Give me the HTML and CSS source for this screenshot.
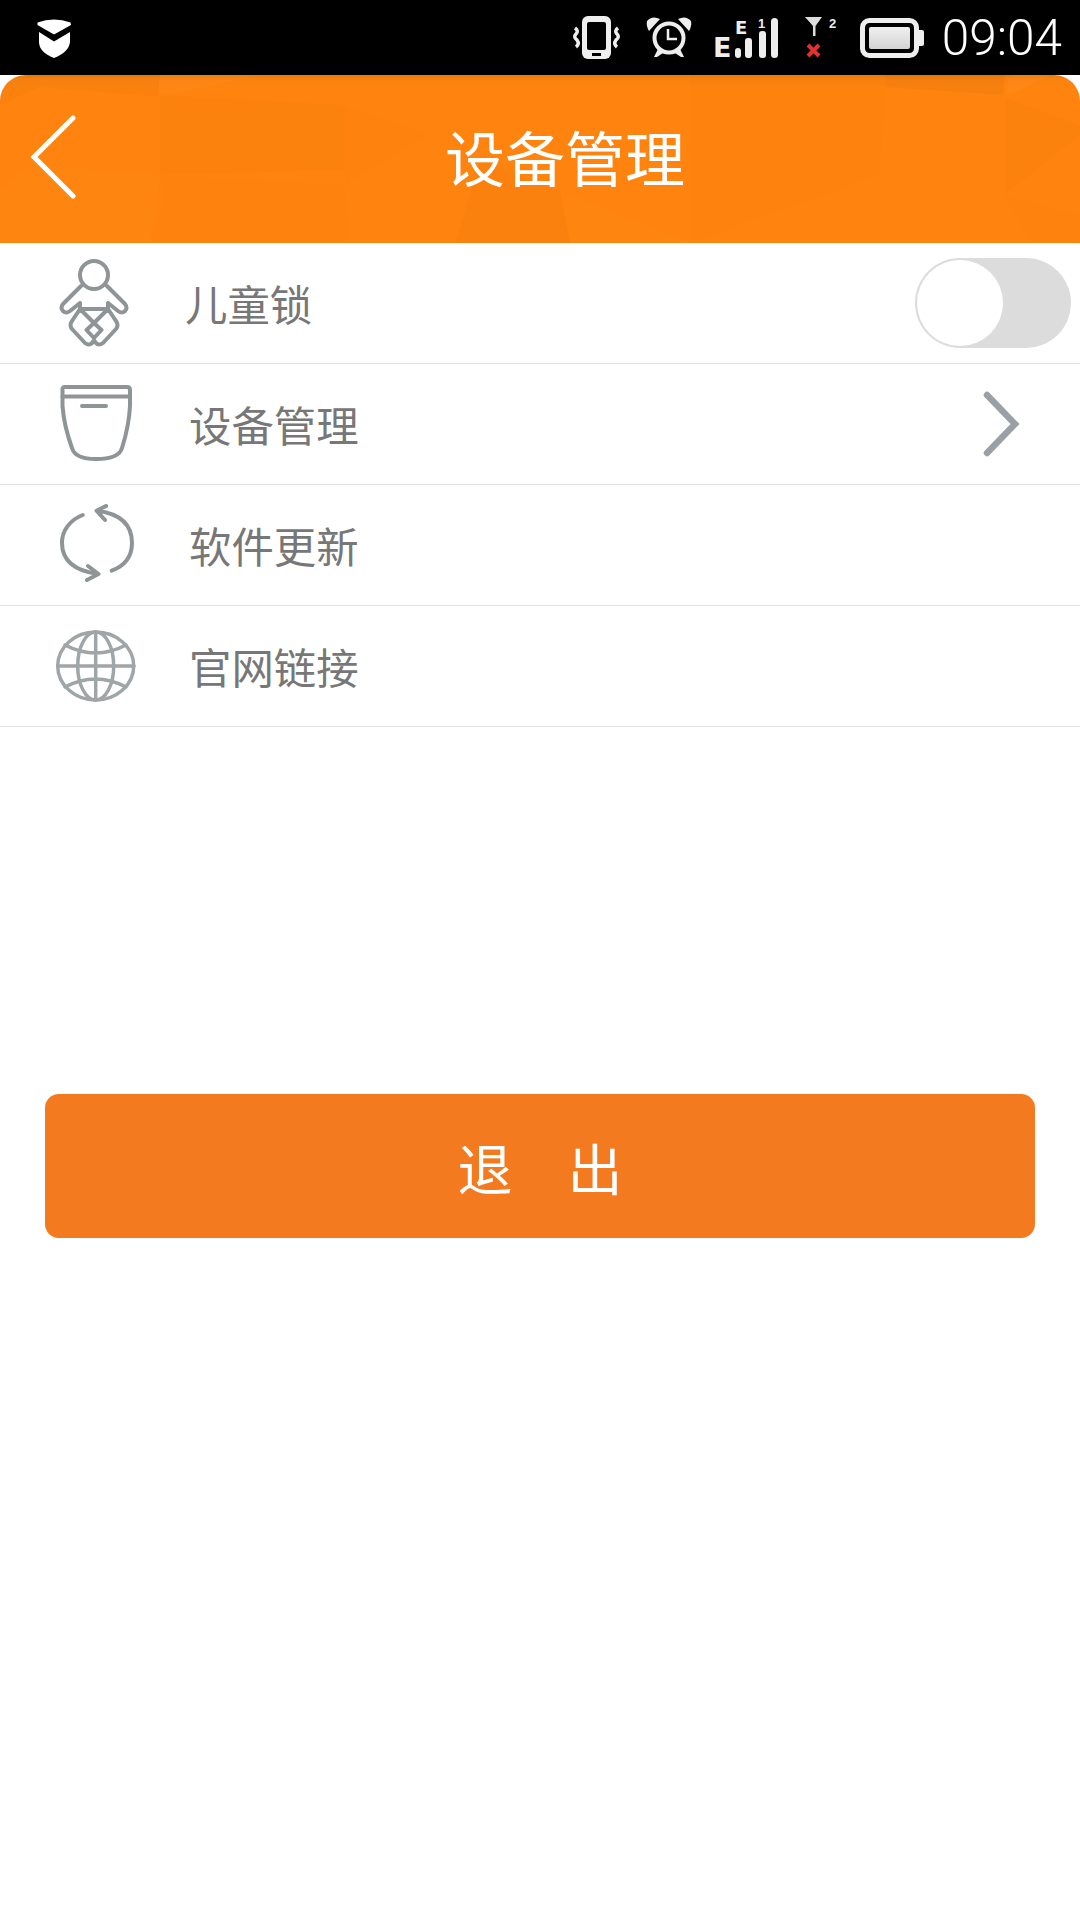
FILE: index.html
```html
<!DOCTYPE html>
<html lang="zh-CN">
<head>
<meta charset="utf-8">
<title>设备管理</title>
<link rel="stylesheet" href="styles.css">
</head>
<body>
<div class="screen">
  <div class="status">
    <svg class="ic-shield" viewBox="37 14 36 46"><path fill="#fff" d="M37.500 21.500Q54 15.500 70.500 21.500L71 24 54 33.500 37.500 24Z"/><path fill="#fff" d="M39 31 54 40.500 70 31V41Q69 51 54 57 39 51 39 41Z"/></svg>
    <div class="status-right">
      <svg class="ic-phone" viewBox="573 14 50 46"><rect x="584" y="15" width="29" height="43" rx="6" fill="#eee"/><rect x="589" y="21" width="19" height="28" rx="2" fill="#000"/><rect x="594" y="52" width="9" height="3" fill="#000"/><path fill="none" stroke="#eee" stroke-width="3.500" d="M577 27q4 3 1 6t1 6q3 4-1 7M620 27q-4 3-1 6t-1 6q-3 4 1 7"/></svg>
      <svg class="ic-alarm" viewBox="648 15 46 46"><circle cx="671" cy="38" r="14.500" fill="none" stroke="#eee" stroke-width="4"/><path fill="none" stroke="#eee" stroke-width="2.500" d="M670 29V39H679"/><path fill="#eee" d="M649 21Q654 15 662 19L651 31Q648 26 649 21ZM693 21Q688 15 680 19L691 31Q694 26 693 21ZM656 57 660 49 665 53 659 57ZM686 57 682 49 677 53 683 57Z"/></svg>
      <svg class="ic-signal" viewBox="712 10 70 54"><text class="sb-e" x="715" y="56">E</text><text class="sb-small" x="737" y="33">E</text><text class="sb-tiny" x="760" y="27">1</text><rect x="737" y="47" width="6" height="10" rx="3" fill="#eee"/><rect x="747" y="37" width="7" height="20" rx="3" fill="#eee"/><rect x="761" y="30" width="7" height="27" rx="3" fill="#eee"/><rect x="773" y="17" width="7" height="40" rx="3.500" fill="#eee"/></svg>
      <svg class="ic-antenna" viewBox="805 14 34 46"><path fill="#ddd" d="M806 16H823L816.500 25V35H814V25Z"/><text class="sb-tiny" x="830" y="27">2</text><path fill="none" stroke="#e5302f" stroke-width="4" d="M809 44 820 55M820 44 809 55"/></svg>
      <svg class="ic-battery" viewBox="860 14 66 46"><defs><linearGradient id="cell" x1="0" y1="0" x2="0" y2="1"><stop offset="0" stop-color="#f0f0f0"/><stop offset="1" stop-color="#d4d4d4"/></linearGradient></defs><rect x="863.500" y="19.500" width="54" height="35" rx="7" fill="none" stroke="#eee" stroke-width="5"/><rect x="870" y="26" width="41" height="22" rx="2" fill="url(#cell)"/><path fill="#eee" d="M920 29H923Q925 29 925 31V43Q925 45 923 45H920Z"/></svg>
      <span class="clock">09:04</span>
    </div>
  </div>

  <header class="header">
    <svg class="facets" viewBox="0 0 1080 168" preserveAspectRatio="none">
      <path fill="#000" fill-opacity=".02" d="M0 0H160L158 22 40 12 0 30Z"/>
      <path fill="#000" fill-opacity=".012" d="M160 20 345 30 345 95 160 100Z"/>
      <path fill="#fff" fill-opacity=".025" d="M160 0H260L158 22Z"/>
      <path fill="#000" fill-opacity=".008" d="M160 100 345 110 350 168 150 168 165 125Z"/>
      <path fill="#000" fill-opacity=".008" d="M345 30 430 60 345 110Z"/>
      <path fill="#000" fill-opacity=".016" d="M480 85 560 115 570 168H455Z"/>
      <path fill="#fff" fill-opacity=".01" d="M560 115 690 168H570Z"/>
      <path fill="#000" fill-opacity=".008" d="M690 0H885V20L880 100 690 168Z"/>
      <path fill="#000" fill-opacity=".03" d="M885 0H1005L1003 20 885 12Z"/>
      <path fill="#fff" fill-opacity=".03" d="M1010 0H1050L1005 22Z"/>
      <path fill="#000" fill-opacity=".012" d="M1005 22 1080 50V60L1005 120Z"/>
      <path fill="#000" fill-opacity=".008" d="M1005 120 1080 140V168H1030Z"/>
      <path fill="#fff" fill-opacity=".012" d="M30 90 160 100 150 168H0V115Z"/>
    </svg>
    <svg class="back" viewBox="0 0 50 84"><path fill="none" stroke="#fff" stroke-width="5" stroke-linecap="round" d="M43 3 4 42 43 81"/></svg>
    <h1 class="title">设备管理</h1>
  </header>

  <ul class="list">
    <li class="row">
      <svg class="row-icon" viewBox="0 0 96 96"><g class="line"><circle cx="46" cy="20" r="14"/><path d="M33 31 15 49Q12 53 15 56 18 59 22 56L32 48M59 31 77 49Q80 53 77 56 74 59 70 56L60 48M32 48 32 54H60L60 48"/><path d="M32 54 24 66Q21 70 24 74L37 88Q41 91 44 88L46 85 48 88Q51 91 55 88L68 74Q71 70 68 66L60 54M32 54 46 68 60 54M46 68 38.500 75 46 83 53.500 75Z"/></g></svg>
      <span class="label label-tight">儿童锁</span>
      <span class="toggle"><span class="knob"></span></span>
    </li>
    <li class="row">
      <svg class="row-icon" viewBox="0 0 96 96"><g class="line"><path d="M14.500 14Q14 11 17 11H79Q82 11 82 14V30Q81 50 74 72 71 83 48 83 27 83 24 72 16 50 14.500 30Z"/><path d="M14.500 20.500H82M34 30H58"/></g></svg>
      <span class="label">设备管理</span>
      <svg class="chevron" viewBox="0 0 40 66"><path fill="none" stroke="#9aa0a7" stroke-width="6.500" stroke-linecap="round" d="M5 4 33 33 5 62"/></svg>
    </li>
    <li class="row">
      <svg class="row-icon" viewBox="0 0 96 96"><g class="line"><path d="M34.700 18A35 30 0 0 0 14 46Q14 72 50 77M40 69 50.500 77 39 83"/><path d="M63.700 73.700Q84 66 84 46 84 18 48.700 13.700M58 9 48.500 13.700 57 23"/></g></svg>
      <span class="label">软件更新</span>
    </li>
    <li class="row">
      <svg class="row-icon" viewBox="0 0 96 96"><g class="line globe"><ellipse cx="47.700" cy="48" rx="38" ry="34"/><ellipse cx="47.700" cy="48" rx="18" ry="34"/><path d="M47.700 14V82M10 48H86M17 27Q47.700 43 78 27M17 69Q47.700 53 78 69"/></g></svg>
      <span class="label">官网链接</span>
    </li>
  </ul>

  <div class="action">
    <button class="exit" type="button">退　出</button>
  </div>
</div>
</body>
</html>
```
FILE: styles.css
```css
* { box-sizing: border-box; }
html, body { margin: 0; padding: 0; background: #fff; }
body { font-family: "Noto Sans CJK SC", "Noto Sans", sans-serif; }
.screen { width: 1080px; height: 1920px; overflow: hidden; background: #fff; }

.status { height: 75px; background: #000; display: flex; align-items: center; justify-content: space-between; padding-left: 37px; }
.status svg { height: 46px; display: block; flex: none; }
.status .ic-signal { height: 54px; }
.status-right { display: flex; align-items: center; }
.ic-shield { width: 36px; }
.ic-phone { width: 50px; margin-right: 25px; }
.ic-alarm { width: 46px; margin-right: 18px; }
.ic-signal { width: 70px; margin-right: 24px; }
.ic-antenna { width: 34px; margin-right: 21px; }
.ic-battery { width: 66px; margin-right: 17px; }
.clock { font-family: Roboto, sans-serif; font-weight: 300; font-size: 49.5px; line-height: 46px; color: #fff; margin-right: 18px; }
.sb-e { font-family: "DejaVu Sans", sans-serif; font-weight: 700; font-size: 27px; fill: #eee; }
.sb-small { font-family: "DejaVu Sans", sans-serif; font-weight: 700; font-size: 18px; fill: #eee; }
.sb-tiny { font-family: "Liberation Sans", sans-serif; font-weight: 700; font-size: 13px; fill: #eee; }

.header { position: relative; height: 168px; background: linear-gradient(#e97a0e 0, #fb820f 4px, #ff840f 12px, #ff840f 100%); border-radius: 26px 26px 0 0; display: flex; align-items: center; overflow: hidden; }
.facets { position: absolute; inset: 0; width: 100%; height: 100%; }
.back { position: relative; width: 50px; height: 84px; margin: -4px 0 0 30px; flex: none; }
.title { position: relative; margin: -6px 0 0 365px; font-size: 60px; line-height: 80px; font-weight: 400; color: #fff; white-space: nowrap; }

.list { list-style: none; margin: 0; padding: 0; }
.row { height: 121px; border-bottom: 1px solid #e2e2e2; display: flex; align-items: center; }
.row-icon { width: 96px; height: 96px; margin-left: 48px; flex: none; filter: blur(.4px); }
.line { fill: none; stroke: #8f9597; stroke-width: 4; stroke-linejoin: round; stroke-linecap: round; }
.globe { stroke: #a0a5a7; stroke-width: 3.500; }
.label { margin-left: 45px; font-size: 42.4px; line-height: 60px; color: #777; white-space: nowrap; }
.label-tight { margin-left: 41px; }
.toggle { margin-left: auto; margin-right: 9px; width: 156px; height: 90px; border-radius: 45px; background: #dcdcdc; padding: 2px; display: flex; }
.knob { width: 86px; height: 86px; border-radius: 50%; background: #fff; }
.chevron { width: 40px; height: 66px; margin-left: auto; margin-right: 58px; }

.action { padding: 367px 45px 0; }
.exit { display: block; width: 100%; height: 144px; border: 0; border-radius: 14px; background: #f47a20; color: #fff; font-family: inherit; font-size: 55px; font-weight: 400; line-height: 1; padding: 0; }
```
